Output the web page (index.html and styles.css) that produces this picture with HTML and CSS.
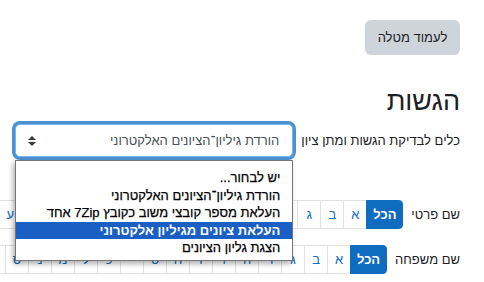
FILE: index.html
```html
<!DOCTYPE html>
<html lang="he" dir="rtl">
<head>
<meta charset="utf-8">
<title>הגשות</title>
<link rel="stylesheet" href="styles.css">
</head>
<body>
<div class="page">
  <div class="top">
    <button class="btn-secondary" type="button">לעמוד מטלה</button>
  </div>
  <h2 class="title">הגשות</h2>
  <div class="tools-row">
    <label class="tools-label">כלים לבדיקת הגשות ומתן ציון</label>
    <div class="select-wrap">
      <div class="select">
        <span class="select-value">הורדת גיליון־הציונים האלקטרוני</span>
        <svg class="select-arrow" width="8" height="10" viewBox="0 0 4 5" aria-hidden="true"><path d="M2 0L0 2h4zm0 5L0 3h4z" fill="#343a40"/></svg>
      </div>
      <ul class="dropdown">
        <li class="option">יש לבחור...</li>
        <li class="option">הורדת גיליון־הציונים האלקטרוני</li>
        <li class="option">העלאת מספר קובצי משוב כקובץ 7Zip אחד</li>
        <li class="option selected">העלאת ציונים מגיליון אלקטרוני</li>
        <li class="option">הצגת גליון הציונים</li>
      </ul>
    </div>
  </div>
  <div class="initials first-row">
    <span class="initials-label">שם פרטי</span>
    <ul class="bar">
      <li class="cell all">הכל</li>
      <li class="cell">א</li><li class="cell">ב</li><li class="cell">ג</li><li class="cell">ד</li><li class="cell">ה</li><li class="cell">ו</li><li class="cell">ז</li><li class="cell">ח</li><li class="cell">ט</li><li class="cell">י</li><li class="cell">כ</li><li class="cell">ל</li><li class="cell">מ</li><li class="cell">נ</li><li class="cell">ס</li><li class="cell">ע</li><li class="cell">פ</li><li class="cell">צ</li><li class="cell">ק</li><li class="cell">ר</li><li class="cell">ש</li><li class="cell">ת</li>
    </ul>
  </div>
  <div class="initials second-row">
    <span class="initials-label">שם משפחה</span>
    <ul class="bar">
      <li class="cell all">הכל</li>
      <li class="cell">א</li><li class="cell">ב</li><li class="cell">ג</li><li class="cell">ד</li><li class="cell">ה</li><li class="cell">ו</li><li class="cell">ז</li><li class="cell">ח</li><li class="cell">ט</li><li class="cell">י</li><li class="cell">כ</li><li class="cell">ל</li><li class="cell">מ</li><li class="cell">נ</li><li class="cell">ס</li><li class="cell">ע</li><li class="cell">פ</li><li class="cell">צ</li><li class="cell">ק</li><li class="cell">ר</li><li class="cell">ש</li><li class="cell">ת</li>
    </ul>
  </div>
</div>
</body>
</html>
```
FILE: styles.css
```css
html, body {
  margin: 0;
  padding: 0;
  overflow: hidden;
  background: #ffffff;
}

body {
  font-family: "Liberation Sans", "DejaVu Sans", sans-serif;
  font-size: 13px;
  color: #1d2125;
}

.page {
  display: flex;
  flex-direction: column;
  align-items: stretch;
  padding: 20px 24px 0 0;
}

.top {
  display: flex;
  justify-content: flex-start;
}

.btn-secondary {
  height: 35px;
  width: 95px;
  padding: 0;
  border: 0;
  border-radius: 6px;
  background: #ced4da;
  color: #1d2125;
  font-family: inherit;
  font-size: 13px;
}

.title {
  margin: 30px 0 0;
  font-size: 27px;
  line-height: 32px;
  font-weight: normal;
  color: #1d2125;
}

.tools-row {
  display: flex;
  align-items: center;
  gap: 8px;
  margin-top: 7px;
}

.tools-label {
  color: #1d2125;
  font-size: 13px;
}

.select-wrap {
  position: relative;
  width: 278px;
}

.select {
  box-sizing: border-box;
  height: 33px;
  display: flex;
  align-items: center;
  justify-content: space-between;
  padding: 0 13px 0 12px;
  border: 1px solid #7ab7ee;
  border-radius: 5px;
  box-shadow: 0 0 0 3px rgba(15, 108, 191, 0.75);
  background: #ffffff;
  color: #495057;
}

.select-arrow {
  display: block;
}

.dropdown {
  position: absolute;
  z-index: 10;
  top: 36px;
  left: 0;
  right: 0;
  margin: 0;
  padding: 8px 0 3px;
  list-style: none;
  background: #ffffff;
  border: 1px solid #767676;
  box-shadow: -2px 3px 5px rgba(0, 0, 0, 0.3);
}

.option {
  line-height: 17.6px;
  padding: 0 12px;
  color: #000000;
  white-space: nowrap;
  -webkit-text-stroke: 0.25px #000000;
}

.option.selected {
  background: #1a5fc4;
  color: #ffffff;
  font-weight: bold;
  -webkit-text-stroke: 0;
}

.initials {
  display: flex;
  align-items: center;
  gap: 8px;
}

.first-row {
  margin-top: 43px;
}

.second-row {
  margin-top: 16px;
}

.initials-label {
  white-space: nowrap;
  color: #1d2125;
}

.bar {
  flex: 1;
  min-width: 0;
  overflow: hidden;
  display: flex;
  margin: 0;
  padding: 0;
  list-style: none;
}

.cell {
  flex: none;
  box-sizing: border-box;
  width: 24px;
  height: 29px;
  display: flex;
  align-items: center;
  justify-content: center;
  border: 1px solid #dee2e6;
  color: #0f6cbf;
  background: #ffffff;
  margin-right: -1px;
}

.cell.all {
  width: 37px;
  margin-right: 0;
  background: #0f6cbf;
  border-color: #0f6cbf;
  color: #ffffff;
  font-weight: bold;
  border-radius: 0 4px 4px 0;
  position: relative;
  z-index: 1;
}
```
